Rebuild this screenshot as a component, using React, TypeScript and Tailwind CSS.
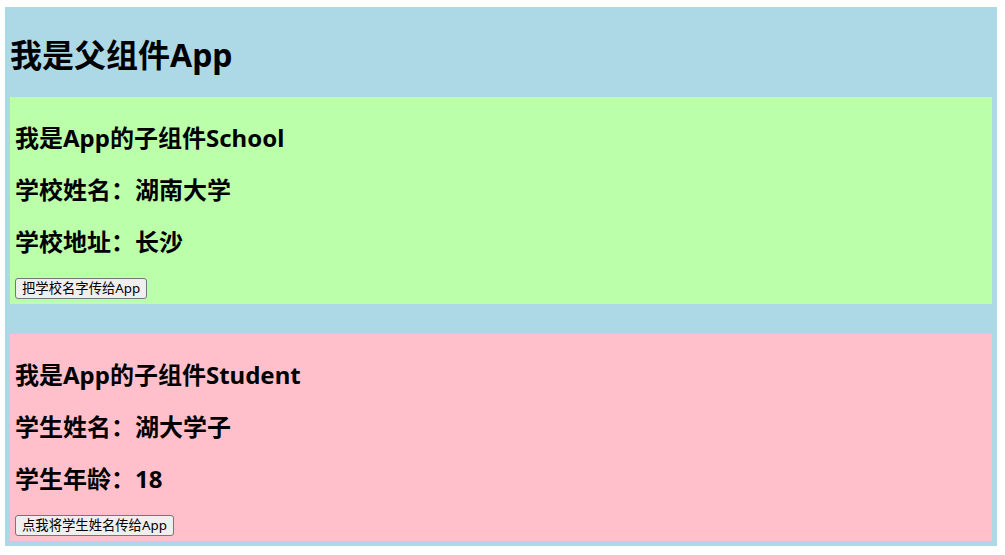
const School: React.FC = () => {
  return (
    <div className="bg-[#bbffaa] p-[5px]">
      <h2 className="text-[24px] leading-[32px] font-bold my-[20px]">我是App的子组件School</h2>
      <h2 className="text-[24px] leading-[32px] font-bold my-[20px]">学校姓名：湖南大学</h2>
      <h2 className="text-[24px] leading-[32px] font-bold my-[20px]">学校地址：长沙</h2>
      <button className="block bg-[#efefef] border border-[#767676] rounded-[3px] px-[6px] py-[1px] text-[13.33px] leading-[17px] text-black hover:bg-[#e5e5e5]">
        把学校名字传给App
      </button>
    </div>
  );
};

const Student: React.FC = () => {
  return (
    <div className="bg-[#ffc0cb] p-[5px] mt-[30px]">
      <h2 className="text-[24px] leading-[32px] font-bold my-[20px]">我是App的子组件Student</h2>
      <h2 className="text-[24px] leading-[32px] font-bold my-[20px]">学生姓名：湖大学子</h2>
      <h2 className="text-[24px] leading-[32px] font-bold my-[20px]">学生年龄：18</h2>
      <button className="block bg-[#efefef] border border-[#767676] rounded-[3px] px-[6px] py-[1px] text-[13.33px] leading-[17px] text-black hover:bg-[#e5e5e5]">
        点我将学生姓名传给App
      </button>
    </div>
  );
};

const App: React.FC = () => {
  return (
    <div className="bg-white min-h-[555px] pt-[7px] pl-[5px] pr-[8px] font-['Noto_Sans','Noto_Sans_CJK_SC',sans-serif] text-black">
      <div className="bg-[#add8e6] p-[5px]">
        <h1 className="text-[32px] leading-[43px] font-bold my-[21px]">我是父组件App</h1>
        <School />
        <Student />
      </div>
    </div>
  );
};

export default App;
